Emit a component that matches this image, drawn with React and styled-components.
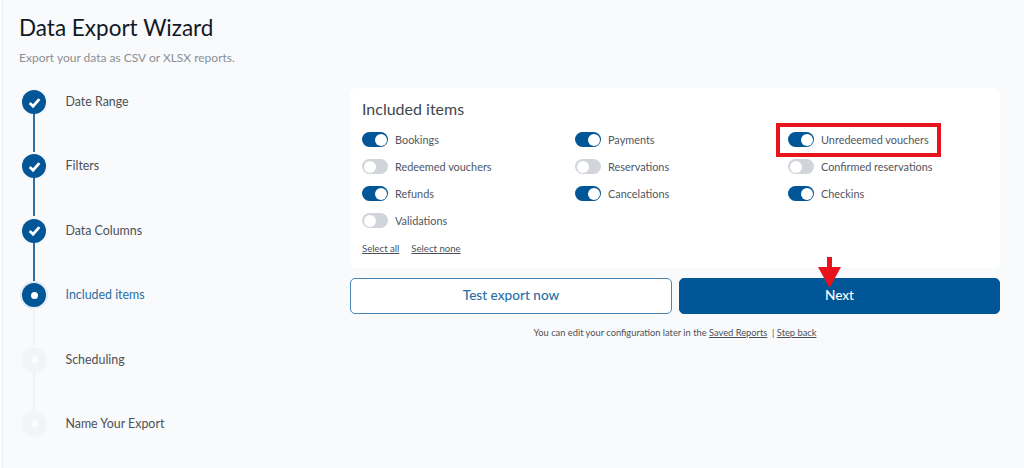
import React from 'react';
import styled, { createGlobalStyle } from 'styled-components';

const Global = createGlobalStyle`
  html, body { margin: 0; padding: 0; background: #ffffff; }
  body { font-family: "Lato", "Open Sans", sans-serif; width: 1024px; height: 468px; overflow: hidden; }
`;

const Page = styled.div`
  position: relative;
  box-sizing: border-box;
  width: 1024px;
  height: 468px;
  margin-left: 2px;
  border-left: 1px solid #eceef2;
  background: #f9fafb;
  padding: 14px 24px 0 16px;
  overflow: hidden;
`;
const Title = styled.h1`
  margin: 0;
  font-size: 22.5px;
  line-height: 27px;
  font-weight: 400;
  color: #111827;
`;
const Subtitle = styled.p`
  margin: 9px 0 0;
  font-size: 12px;
  line-height: 16px;
  color: #8b8f98;
`;
const Body = styled.div`
  display: flex;
  margin-top: 22px;
`;
const Steps = styled.ol`
  list-style: none;
  margin: 2px 0 0;
  padding: 0;
  width: 331px;
  flex: none;
`;
const Step = styled.li`
  position: relative;
  display: flex;
  align-items: flex-start;
  gap: 19.5px;
  height: 64.4px;
  padding-left: 3px;
`;
const Connector = styled.span`
  position: absolute;
  left: 14px;
  top: 24px;
  width: 2px;
  height: 38px;
  background: ${p => (p.$done ? '#2f6ea3' : '#eef0f3')};
`;
const Dot = styled.span`
  display: flex;
  align-items: center;
  justify-content: center;
  width: 24px;
  height: 24px;
  flex: none;
  border-radius: 50%;
  background: ${p => (p.$todo ? '#f3f4f6' : '#005696')};
  box-shadow: 0 0 0 2px ${p => (p.$current ? '#e0eaf3' : '#f7f8fa')};
`;
const Pip = styled.span`
  width: 7px;
  height: 7px;
  border-radius: 50%;
  background: ${p => (p.$todo ? '#fcfcfd' : '#ffffff')};
`;
const StepLabel = styled.span`
  font-size: 12.4px;
  line-height: 24px;
  color: ${p => (p.$current ? '#2a6fa5' : '#4b5058')};
`;
const Main = styled.div`
  width: 650px;
  flex: none;
`;
const Panel = styled.section`
  box-sizing: border-box;
  height: 180px;
  background: #ffffff;
  border-radius: 6px;
  padding: 11px 12px 0;
`;
const PanelTitle = styled.h2`
  margin: 0;
  font-size: 16px;
  line-height: 20px;
  font-weight: 400;
  color: #3f4650;
`;
const Items = styled.div`
  display: grid;
  grid-template-columns: repeat(3, 213px);
  grid-auto-rows: 27px;
  margin-top: 7px;
`;
const Item = styled.label`
  display: flex;
  align-items: center;
  gap: 7px;
  font-size: 10.9px;
  color: #50565f;
`;
const Toggle = styled.span`
  position: relative;
  display: block;
  width: 26px;
  height: 15px;
  border-radius: 8px;
  background: ${p => (p.$on ? '#005696' : '#d1d5db')};
  &::after {
    content: '';
    position: absolute;
    top: 1.5px;
    left: ${p => (p.$on ? '12.5px' : '1.5px')};
    width: 12px;
    height: 12px;
    border-radius: 50%;
    background: #ffffff;
  }
`;
const Links = styled.div`
  display: flex;
  gap: 12px;
  margin-top: 8px;
`;
const Link = styled.a`
  font-size: 9.6px;
  line-height: 14px;
  color: #4b5058;
  text-decoration: underline;
`;
const Actions = styled.div`
  display: grid;
  grid-template-columns: 322px 321px;
  gap: 7px;
  margin-top: 10px;
`;
const Button = styled.button`
  height: 36px;
  padding: 0 0 3px;
  border-radius: 5px;
  border: 1px solid ${p => (p.$primary ? '#005696' : '#4a86b4')};
  background: ${p => (p.$primary ? '#005696' : '#ffffff')};
  color: ${p => (p.$primary ? '#ffffff' : '#2a6fa5')};
  font-family: inherit;
  font-size: 13.6px;
  font-weight: 500;
`;
const Footnote = styled.p`
  margin: 12px 0 0;
  text-align: center;
  font-size: 9.3px;
  line-height: 14px;
  color: #4b5058;
`;
const FootLink = styled(Link)`
  font-size: 9.3px;
`;
const Highlight = styled.div`
  position: absolute;
  left: 773px;
  top: 123px;
  box-sizing: border-box;
  width: 165px;
  height: 34px;
  border: 4px solid #e8141b;
`;
const Arrow = styled.svg`
  position: absolute;
  left: 815px;
  top: 257px;
`;

const steps = [
  ['Date Range', 'done'],
  ['Filters', 'done'],
  ['Data Columns', 'done'],
  ['Included items', 'current'],
  ['Scheduling', 'todo'],
  ['Name Your Export', 'todo'],
];
const items = [
  ['Bookings', true], ['Payments', true], ['Unredeemed vouchers', true],
  ['Redeemed vouchers', false], ['Reservations', false], ['Confirmed reservations', false],
  ['Refunds', true], ['Cancelations', true], ['Checkins', true],
  ['Validations', false],
];

export default function App() {
  return (
    <>
      <Global />
      <Page>
        <Title>Data Export Wizard</Title>
        <Subtitle>Export your data as CSV or XLSX reports.</Subtitle>
        <Body>
          <Steps>
            {steps.map(([label, state], i) => (
              <Step key={label}>
                {i < steps.length - 1 && <Connector $done={state === 'done'} />}
                <Dot $todo={state === 'todo'} $current={state === 'current'}>
                  {state === 'done' ? (
                    <svg width="15" height="15" viewBox="0 0 14 14" fill="none">
                      <path d="M2.5 7.5 L5.7 10.5 L11.5 3.8" stroke="#fff" strokeWidth="2.6" />
                    </svg>
                  ) : (
                    <Pip $todo={state === 'todo'} />
                  )}
                </Dot>
                <StepLabel $current={state === 'current'}>{label}</StepLabel>
              </Step>
            ))}
          </Steps>
          <Main>
            <Panel>
              <PanelTitle>Included items</PanelTitle>
              <Items>
                {items.map(([label, on]) => (
                  <Item key={label}>
                    <Toggle $on={on} />
                    {label}
                  </Item>
                ))}
              </Items>
              <Links>
                <Link>Select all</Link>
                <Link>Select none</Link>
              </Links>
            </Panel>
            <Actions>
              <Button>Test export now</Button>
              <Button $primary>Next</Button>
            </Actions>
            <Footnote>
              You can edit your configuration later in the <FootLink>Saved Reports</FootLink> &nbsp;| <FootLink>Step back</FootLink>
            </Footnote>
          </Main>
        </Body>
        <Highlight />
        <Arrow width="23" height="31" viewBox="0 0 23 31">
          <path d="M9 0 H14 V10 H23 L11.5 31 L0 10 H9 Z" fill="#e8141b" />
        </Arrow>
      </Page>
    </>
  );
}
